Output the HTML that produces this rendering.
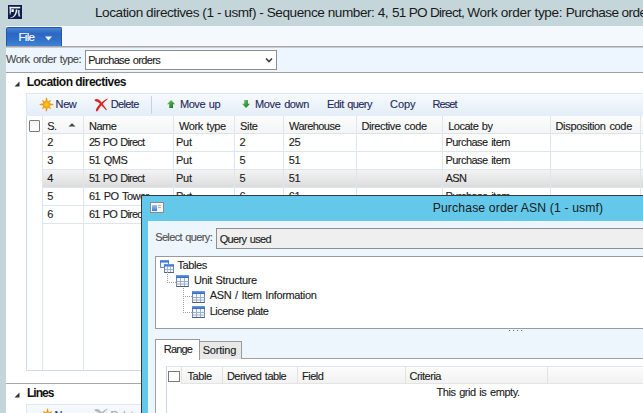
<!DOCTYPE html>
<html><head><meta charset="utf-8">
<style>
html,body{margin:0;padding:0;}
body{width:643px;height:413px;overflow:hidden;position:relative;background:#c5d6db;font-family:"Liberation Sans",sans-serif;}
.a{position:absolute;}
.t{position:absolute;white-space:pre;line-height:1;font-family:"Liberation Sans",sans-serif;}
</style></head><body>
<!-- main window client -->
<div class="a" style="left:6px;top:26px;width:637px;height:387px;background:#fff"></div>
<!-- ribbon strip -->
<div class="a" style="left:6px;top:26px;width:637px;height:20px;background:#f4f9fe"></div>
<!-- File button -->
<div class="a" style="left:6px;top:26.5px;width:54px;height:19.5px;border:1px solid #2656a8;border-bottom:none;border-radius:2px 2px 0 0;background:linear-gradient(#4a84d6,#2d66c2 30%,#3170c8 60%,#4285da)"></div>
<svg class="a" style="left:45px;top:35.7px" width="7" height="5"><path d="M0 0.5H7L3.5 4.5Z" fill="#fff"/></svg>
<!-- line under ribbon -->
<div class="a" style="left:6px;top:46px;width:637px;height:1px;background:#a7a7a7"></div>
<div class="a" style="left:6px;top:47px;width:637px;height:1px;background:#c9ccd0"></div>
<!-- filter strip -->
<div class="a" style="left:6px;top:48px;width:637px;height:24px;background:#edf6fe"></div>
<div class="a" style="left:6px;top:72px;width:637px;height:1px;background:#a0a0a0"></div>
<!-- combo -->
<div class="a" style="left:85px;top:50px;width:190px;height:18px;border:1px solid #8f8f8f;background:#fff"></div>
<svg class="a" style="left:265px;top:57px" width="8" height="7"><path d="M1 1.5L4 4.6L7 1.5" stroke="#3a3a3a" stroke-width="1.5" fill="none"/></svg>
<!-- section triangle -->
<svg class="a" style="left:14px;top:81px" width="6" height="6"><path d="M5.5 0.5V5.5H0.5Z" fill="#333"/></svg>
<!-- toolbar -->
<div class="a" style="left:26px;top:93px;width:617px;height:22px;border-top:1px solid #dfe8f1;border-left:1px solid #dfe8f1;background:linear-gradient(#f7fafd,#eaf2fa 60%,#e4eef9)"></div>
<div class="a" style="left:151px;top:96px;width:1px;height:18px;background:#c8d2dc"></div>
<!-- sun icon -->
<svg class="a" style="left:39px;top:97.3px" width="15" height="15" viewBox="0 0 15 15">
 <defs><radialGradient id="sg" cx="0.5" cy="0.5" r="0.5"><stop offset="0" stop-color="#ffd21a"/><stop offset="0.5" stop-color="#f9b20e"/><stop offset="1" stop-color="#e98a0c"/></radialGradient></defs>
 <path d="M7.50 0.80 L8.42 5.28 L11.46 3.54 L9.72 6.58 L14.20 7.50 L9.72 8.42 L11.46 11.46 L8.42 9.72 L7.50 14.20 L6.58 9.72 L3.54 11.46 L5.28 8.42 L0.80 7.50 L5.28 6.58 L3.54 3.54 L6.58 5.28Z" fill="url(#sg)" stroke="#ee9410" stroke-width="0.9" stroke-linejoin="round"/>
</svg>
<!-- X icon -->
<svg class="a" style="left:94px;top:98px" width="14" height="14" viewBox="0 0 14 14">
 <path d="M0.6 1.6C2.4 0.2 5.2 0.8 7.6 4.4L12.8 11.6L12.1 12.2L6.6 6.4C4.6 4.2 2.6 3.4 0.9 2.9Z M13.3 0.6L13.6 1.3C9.4 4.4 6.4 8.2 4 12.6C3.4 13.6 1.9 13.7 1.8 12.6C2.6 9 7.2 3.8 13.3 0.6Z" fill="#d8261e"/>
</svg>
<!-- up arrow -->
<svg class="a" style="left:167px;top:100px" width="8" height="8" viewBox="0 0 8 8">
 <defs><linearGradient id="ga" x1="0" y1="0" x2="1" y2="1"><stop offset="0" stop-color="#7acb74"/><stop offset="0.55" stop-color="#3d9a3e"/><stop offset="1" stop-color="#17601c"/></linearGradient></defs>
 <path d="M4 0L8 4.2H6V8H2.2V4.2H0Z" fill="url(#ga)"/>
</svg>
<!-- down arrow -->
<svg class="a" style="left:242px;top:100px" width="8" height="8" viewBox="0 0 8 8">
 <path d="M4 8L8 3.8H6V0H2.2V3.8H0Z" fill="url(#ga)"/>
</svg>
<!-- grid -->
<div class="a" style="left:26px;top:116px;width:617px;height:255px;border-left:1px solid #cfdbe8;border-bottom:1px solid #cfdbe8;background:#fff;box-sizing:border-box"></div>
<!-- header -->
<div class="a" style="left:42px;top:116px;width:601px;height:17px;background:linear-gradient(#fdfdfd,#f3f4f5);border-bottom:1px solid #dfe3e8"></div>
<div class="a" style="left:29px;top:120px;width:9px;height:9.5px;border:1px solid #7c7c7c;background:linear-gradient(#f4f4f4,#fff);border-radius:1px"></div>
<svg class="a" style="left:68px;top:123px" width="8" height="4"><path d="M0.5 3.5L4 0.3L7.5 3.5Z" fill="#444"/></svg>
<!-- header separators -->
<div class="a" style="left:42px;top:116px;width:1px;height:17px;background:#e6e9ec"></div>
<div class="a" style="left:83px;top:116px;width:1px;height:17px;background:#e2e6ea"></div>
<div class="a" style="left:173px;top:116px;width:1px;height:17px;background:#e2e6ea"></div>
<div class="a" style="left:234px;top:116px;width:1px;height:17px;background:#e2e6ea"></div>
<div class="a" style="left:283px;top:116px;width:1px;height:17px;background:#e2e6ea"></div>
<div class="a" style="left:356px;top:116px;width:1px;height:17px;background:#e2e6ea"></div>
<div class="a" style="left:442px;top:116px;width:1px;height:17px;background:#e2e6ea"></div>
<div class="a" style="left:550px;top:116px;width:1px;height:17px;background:#e2e6ea"></div>
<div class="a" style="left:640px;top:116px;width:1px;height:17px;background:#e2e6ea"></div>
<!-- selected row -->
<div class="a" style="left:42px;top:170px;width:601px;height:17px;background:linear-gradient(#f3f3f3,#e6e6e6 60%,#dcdcdc)"></div>
<!-- row lines -->
<div class="a" style="left:42px;top:151px;width:601px;height:1px;background:#dde6ef"></div>
<div class="a" style="left:42px;top:169px;width:601px;height:1px;background:#dde6ef"></div>
<div class="a" style="left:42px;top:187px;width:601px;height:1px;background:#dde6ef"></div>
<div class="a" style="left:42px;top:205px;width:601px;height:1px;background:#dde6ef"></div>
<div class="a" style="left:42px;top:223px;width:601px;height:1px;background:#dde6ef"></div>
<!-- column lines in body -->
<div class="a" style="left:42px;top:133px;width:1px;height:237px;background:#dde6ef"></div>
<div class="a" style="left:83px;top:133px;width:1px;height:237px;background:#dde6ef"></div>
<div class="a" style="left:173px;top:133px;width:1px;height:90px;background:#dde6ef"></div>
<div class="a" style="left:234px;top:133px;width:1px;height:90px;background:#dde6ef"></div>
<div class="a" style="left:283px;top:133px;width:1px;height:90px;background:#dde6ef"></div>
<div class="a" style="left:356px;top:133px;width:1px;height:90px;background:#dde6ef"></div>
<div class="a" style="left:442px;top:133px;width:1px;height:90px;background:#dde6ef"></div>
<div class="a" style="left:550px;top:133px;width:1px;height:90px;background:#dde6ef"></div>
<div class="a" style="left:640px;top:133px;width:1px;height:90px;background:#dde6ef"></div>
<!-- lines section -->
<div class="a" style="left:6px;top:383px;width:637px;height:1px;background:#a8a8a8"></div>
<svg class="a" style="left:14px;top:392px" width="6" height="6"><path d="M5.5 0.5V5.5H0.5Z" fill="#333"/></svg>
<div class="a" style="left:26px;top:404px;width:617px;height:12px;border-top:1px solid #dfe8f1;border-left:1px solid #dfe8f1;background:linear-gradient(#f7fafd,#eef4fb)"></div>
<svg class="a" style="left:40px;top:407.7px" width="15" height="15" viewBox="0 0 15 15">
 <defs><radialGradient id="sg" cx="0.5" cy="0.5" r="0.5"><stop offset="0" stop-color="#ffd21a"/><stop offset="0.5" stop-color="#f9b20e"/><stop offset="1" stop-color="#e98a0c"/></radialGradient></defs>
 <path d="M7.50 0.80 L8.42 5.28 L11.46 3.54 L9.72 6.58 L14.20 7.50 L9.72 8.42 L11.46 11.46 L8.42 9.72 L7.50 14.20 L6.58 9.72 L3.54 11.46 L5.28 8.42 L0.80 7.50 L5.28 6.58 L3.54 3.54 L6.58 5.28Z" fill="url(#sg)" stroke="#ee9410" stroke-width="0.9" stroke-linejoin="round"/>
</svg>
<svg class="a" style="left:94px;top:408px" width="14" height="14" viewBox="0 0 14 14">
 <path d="M0.6 1.6C2.4 0.2 5.2 0.8 7.6 4.4L12.8 11.6L12.1 12.2L6.6 6.4C4.6 4.2 2.6 3.4 0.9 2.9Z M13.3 0.6L13.6 1.3C9.4 4.4 6.4 8.2 4 12.6C3.4 13.6 1.9 13.7 1.8 12.6C2.6 9 7.2 3.8 13.3 0.6Z" fill="#b4b4b4"/>
</svg>

<!-- app icon -->
<svg class="a" style="left:8px;top:5px" width="14" height="14" viewBox="0 0 14 14">
 <rect x="0" y="0" width="14" height="14" fill="#0e1d4c"/>
 <rect x="1.6" y="1.8" width="10.6" height="1.6" fill="#f4f6fa"/>
 <rect x="1.6" y="1.8" width="1.3" height="6.2" fill="#e8ecf4"/>
 <rect x="3.4" y="4.2" width="2.4" height="2.8" fill="#fff"/>
 <path d="M2.5 12.6C5.6 12.2 7.4 9.6 7.8 4.6L9.4 4.6C9 9.4 7 12.6 2.5 13.2Z" fill="#f0f3f8"/>
 <path d="M9.8 5L11.6 5L11.6 8.5L12.4 11.6L10.6 11.6L9.8 8Z" fill="#c9d2e4"/>
 <rect x="1.6" y="8" width="1.3" height="1.6" fill="#9aa6c2"/>
</svg>
<div class='t' style='left:95.00px;top:5.89px;font-size:13.6px;font-weight:400;color:#1a1a1a;letter-spacing:-0.450px;word-spacing:0px'>Location directives (1 - usmf) - Sequence number: 4, </div>
<div class='t' style='left:391.90px;top:5.89px;font-size:13.6px;font-weight:400;color:#1a1a1a;letter-spacing:-0.720px;word-spacing:0px'>51 PO Direct, </div>
<div class='t' style='left:467.20px;top:5.89px;font-size:13.6px;font-weight:400;color:#1a1a1a;letter-spacing:-0.319px;word-spacing:0px'>Work order type: </div>
<div class='t' style='left:565.80px;top:5.89px;font-size:13.6px;font-weight:400;color:#1a1a1a;letter-spacing:-0.600px;word-spacing:0px'>Purchase orders</div>
<div class='t' style='left:18.50px;top:31.57px;font-size:11.5px;font-weight:400;color:#ffffff;letter-spacing:-0.677px;word-spacing:0px;-webkit-text-stroke:0.12px #ffffff'>File</div>
<div class='t' style='left:6.00px;top:53.89px;font-size:11px;font-weight:400;color:#4a4a4a;letter-spacing:-0.507px;word-spacing:1.0px;-webkit-text-stroke:0.12px #4a4a4a'>Work order type:</div>
<div class='t' style='left:88.20px;top:54.99px;font-size:11px;font-weight:400;color:#1b1b1b;letter-spacing:-0.658px;word-spacing:1.0px;-webkit-text-stroke:0.12px #1b1b1b'>Purchase orders</div>
<div class='t' style='left:26.70px;top:75.84px;font-size:12px;font-weight:700;color:#111;letter-spacing:-0.532px;word-spacing:0px'>Location directives</div>
<div class='t' style='left:55.60px;top:98.59px;font-size:11px;font-weight:400;color:#252a5c;letter-spacing:-0.408px;word-spacing:0px;-webkit-text-stroke:0.12px #252a5c'>New</div>
<div class='t' style='left:110.70px;top:98.59px;font-size:11px;font-weight:400;color:#252a5c;letter-spacing:-0.639px;word-spacing:0px;-webkit-text-stroke:0.12px #252a5c'>Delete</div>
<div class='t' style='left:179.90px;top:98.59px;font-size:11px;font-weight:400;color:#252a5c;letter-spacing:-0.401px;word-spacing:1.0px;-webkit-text-stroke:0.12px #252a5c'>Move up</div>
<div class='t' style='left:255.10px;top:98.59px;font-size:11px;font-weight:400;color:#252a5c;letter-spacing:-0.383px;word-spacing:1.0px;-webkit-text-stroke:0.12px #252a5c'>Move down</div>
<div class='t' style='left:326.90px;top:98.59px;font-size:11px;font-weight:400;color:#252a5c;letter-spacing:-0.548px;word-spacing:1.0px;-webkit-text-stroke:0.12px #252a5c'>Edit query</div>
<div class='t' style='left:390.00px;top:98.59px;font-size:11px;font-weight:400;color:#252a5c;letter-spacing:-0.062px;word-spacing:0px;-webkit-text-stroke:0.12px #252a5c'>Copy</div>
<div class='t' style='left:432.50px;top:98.59px;font-size:11px;font-weight:400;color:#252a5c;letter-spacing:-0.938px;word-spacing:0px;-webkit-text-stroke:0.12px #252a5c'>Reset</div>
<div class='t' style='left:47.30px;top:120.59px;font-size:11px;font-weight:400;color:#1b1b1b;letter-spacing:-0.600px;word-spacing:0px;-webkit-text-stroke:0.12px #1b1b1b'>S.</div>
<div class='t' style='left:88.90px;top:120.59px;font-size:11px;font-weight:400;color:#1b1b1b;letter-spacing:-0.415px;word-spacing:0px;-webkit-text-stroke:0.12px #1b1b1b'>Name</div>
<div class='t' style='left:179.00px;top:120.59px;font-size:11px;font-weight:400;color:#1b1b1b;letter-spacing:-0.389px;word-spacing:1.0px;-webkit-text-stroke:0.12px #1b1b1b'>Work type</div>
<div class='t' style='left:240.00px;top:120.59px;font-size:11px;font-weight:400;color:#1b1b1b;letter-spacing:-0.323px;word-spacing:0px;-webkit-text-stroke:0.12px #1b1b1b'>Site</div>
<div class='t' style='left:289.00px;top:120.59px;font-size:11px;font-weight:400;color:#1b1b1b;letter-spacing:-0.543px;word-spacing:0px;-webkit-text-stroke:0.12px #1b1b1b'>Warehouse</div>
<div class='t' style='left:361.50px;top:120.59px;font-size:11px;font-weight:400;color:#1b1b1b;letter-spacing:-0.400px;word-spacing:1.0px;-webkit-text-stroke:0.12px #1b1b1b'>Directive code</div>
<div class='t' style='left:448.20px;top:120.59px;font-size:11px;font-weight:400;color:#1b1b1b;letter-spacing:-0.488px;word-spacing:1.0px;-webkit-text-stroke:0.12px #1b1b1b'>Locate by</div>
<div class='t' style='left:555.50px;top:120.59px;font-size:11px;font-weight:400;color:#1b1b1b;letter-spacing:-0.331px;word-spacing:1.0px;-webkit-text-stroke:0.12px #1b1b1b'>Disposition code</div>
<div class='t' style='left:47.30px;top:136.69px;font-size:11px;font-weight:400;color:#1b1b1b;letter-spacing:-0.500px;word-spacing:0px;-webkit-text-stroke:0.12px #1b1b1b'>2</div>
<div class='t' style='left:88.90px;top:136.69px;font-size:11px;font-weight:400;color:#1b1b1b;letter-spacing:-0.806px;word-spacing:1.0px;-webkit-text-stroke:0.12px #1b1b1b'>25 PO Direct</div>
<div class='t' style='left:176.00px;top:136.69px;font-size:11px;font-weight:400;color:#1b1b1b;letter-spacing:-0.258px;word-spacing:0px;-webkit-text-stroke:0.12px #1b1b1b'>Put</div>
<div class='t' style='left:239.50px;top:136.69px;font-size:11px;font-weight:400;color:#1b1b1b;letter-spacing:-0.500px;word-spacing:0px;-webkit-text-stroke:0.12px #1b1b1b'>2</div>
<div class='t' style='left:288.80px;top:136.69px;font-size:11px;font-weight:400;color:#1b1b1b;letter-spacing:-0.500px;word-spacing:0px;-webkit-text-stroke:0.12px #1b1b1b'>25</div>
<div class='t' style='left:445.40px;top:136.69px;font-size:11px;font-weight:400;color:#1b1b1b;letter-spacing:-0.526px;word-spacing:1.0px;-webkit-text-stroke:0.12px #1b1b1b'>Purchase item</div>
<div class='t' style='left:47.30px;top:154.69px;font-size:11px;font-weight:400;color:#1b1b1b;letter-spacing:-0.500px;word-spacing:0px;-webkit-text-stroke:0.12px #1b1b1b'>3</div>
<div class='t' style='left:88.90px;top:154.69px;font-size:11px;font-weight:400;color:#1b1b1b;letter-spacing:-0.500px;word-spacing:1.0px;-webkit-text-stroke:0.12px #1b1b1b'>51 QMS</div>
<div class='t' style='left:176.00px;top:154.69px;font-size:11px;font-weight:400;color:#1b1b1b;letter-spacing:-0.258px;word-spacing:0px;-webkit-text-stroke:0.12px #1b1b1b'>Put</div>
<div class='t' style='left:239.50px;top:154.69px;font-size:11px;font-weight:400;color:#1b1b1b;letter-spacing:-0.500px;word-spacing:0px;-webkit-text-stroke:0.12px #1b1b1b'>5</div>
<div class='t' style='left:288.80px;top:154.69px;font-size:11px;font-weight:400;color:#1b1b1b;letter-spacing:-0.500px;word-spacing:0px;-webkit-text-stroke:0.12px #1b1b1b'>51</div>
<div class='t' style='left:445.40px;top:154.69px;font-size:11px;font-weight:400;color:#1b1b1b;letter-spacing:-0.526px;word-spacing:1.0px;-webkit-text-stroke:0.12px #1b1b1b'>Purchase item</div>
<div class='t' style='left:47.30px;top:172.69px;font-size:11px;font-weight:400;color:#1b1b1b;letter-spacing:-0.500px;word-spacing:0px;-webkit-text-stroke:0.12px #1b1b1b'>4</div>
<div class='t' style='left:88.90px;top:172.69px;font-size:11px;font-weight:400;color:#1b1b1b;letter-spacing:-0.806px;word-spacing:1.0px;-webkit-text-stroke:0.12px #1b1b1b'>51 PO Direct</div>
<div class='t' style='left:176.00px;top:172.69px;font-size:11px;font-weight:400;color:#1b1b1b;letter-spacing:-0.258px;word-spacing:0px;-webkit-text-stroke:0.12px #1b1b1b'>Put</div>
<div class='t' style='left:239.50px;top:172.69px;font-size:11px;font-weight:400;color:#1b1b1b;letter-spacing:-0.500px;word-spacing:0px;-webkit-text-stroke:0.12px #1b1b1b'>5</div>
<div class='t' style='left:288.80px;top:172.69px;font-size:11px;font-weight:400;color:#1b1b1b;letter-spacing:-0.500px;word-spacing:0px;-webkit-text-stroke:0.12px #1b1b1b'>51</div>
<div class='t' style='left:445.40px;top:172.69px;font-size:11px;font-weight:400;color:#1b1b1b;letter-spacing:-0.500px;word-spacing:0px;-webkit-text-stroke:0.12px #1b1b1b'>ASN</div>
<div class='t' style='left:47.30px;top:190.69px;font-size:11px;font-weight:400;color:#1b1b1b;letter-spacing:-0.500px;word-spacing:0px;-webkit-text-stroke:0.12px #1b1b1b'>5</div>
<div class='t' style='left:88.90px;top:190.69px;font-size:11px;font-weight:400;color:#1b1b1b;letter-spacing:-0.500px;word-spacing:1.0px;-webkit-text-stroke:0.12px #1b1b1b'>61 PO Tower</div>
<div class='t' style='left:176.00px;top:190.69px;font-size:11px;font-weight:400;color:#1b1b1b;letter-spacing:-0.258px;word-spacing:0px;-webkit-text-stroke:0.12px #1b1b1b'>Put</div>
<div class='t' style='left:239.50px;top:190.69px;font-size:11px;font-weight:400;color:#1b1b1b;letter-spacing:-0.500px;word-spacing:0px;-webkit-text-stroke:0.12px #1b1b1b'>6</div>
<div class='t' style='left:288.80px;top:190.69px;font-size:11px;font-weight:400;color:#1b1b1b;letter-spacing:-0.500px;word-spacing:0px;-webkit-text-stroke:0.12px #1b1b1b'>61</div>
<div class='t' style='left:445.40px;top:190.69px;font-size:11px;font-weight:400;color:#1b1b1b;letter-spacing:-0.526px;word-spacing:1.0px;-webkit-text-stroke:0.12px #1b1b1b'>Purchase item</div>
<div class='t' style='left:47.30px;top:208.69px;font-size:11px;font-weight:400;color:#1b1b1b;letter-spacing:-0.500px;word-spacing:0px;-webkit-text-stroke:0.12px #1b1b1b'>6</div>
<div class='t' style='left:88.90px;top:208.69px;font-size:11px;font-weight:400;color:#1b1b1b;letter-spacing:-0.806px;word-spacing:1.0px;-webkit-text-stroke:0.12px #1b1b1b'>61 PO Direct</div>
<div class='t' style='left:176.00px;top:208.69px;font-size:11px;font-weight:400;color:#1b1b1b;letter-spacing:-0.258px;word-spacing:0px;-webkit-text-stroke:0.12px #1b1b1b'>Put</div>
<div class='t' style='left:239.50px;top:208.69px;font-size:11px;font-weight:400;color:#1b1b1b;letter-spacing:-0.500px;word-spacing:0px;-webkit-text-stroke:0.12px #1b1b1b'>6</div>
<div class='t' style='left:288.80px;top:208.69px;font-size:11px;font-weight:400;color:#1b1b1b;letter-spacing:-0.500px;word-spacing:0px;-webkit-text-stroke:0.12px #1b1b1b'>61</div>
<div class='t' style='left:445.40px;top:208.69px;font-size:11px;font-weight:400;color:#1b1b1b;letter-spacing:-0.526px;word-spacing:1.0px;-webkit-text-stroke:0.12px #1b1b1b'>Purchase item</div>
<div class='t' style='left:26.90px;top:387.14px;font-size:12px;font-weight:700;color:#111;letter-spacing:-0.936px;word-spacing:0px'>Lines</div>
<div class='t' style='left:54.50px;top:410.49px;font-size:11px;font-weight:400;color:#252a5c;letter-spacing:-0.408px;word-spacing:0px;-webkit-text-stroke:0.12px #252a5c'>New</div>
<div class='t' style='left:110.50px;top:410.49px;font-size:11px;font-weight:400;color:#a8a8a8;letter-spacing:-0.639px;word-spacing:0px;-webkit-text-stroke:0.12px #a8a8a8'>Delete</div>
<!-- ========== DIALOG ========== -->
<div class="a" style="left:141px;top:195px;width:502px;height:218px;background:#2f3a40"></div>
<div class="a" style="left:142px;top:196px;width:501px;height:217px;background:#63c8e9"></div>
<div class="a" style="left:148px;top:221px;width:495px;height:192px;background:#edf6fd"></div>
<!-- dialog icon -->
<div class="a" style="left:150px;top:202px;width:12px;height:9px;border:1px solid #8a8a8a;background:#f4f4f4"></div>
<div class="a" style="left:152px;top:205px;width:5px;height:6px;background:linear-gradient(#9fc4ef,#3d7ad0)"></div>
<div class="a" style="left:158px;top:205px;width:3px;height:1px;background:#b0b0b0"></div>
<div class="a" style="left:158px;top:207px;width:3px;height:1px;background:#b0b0b0"></div>
<!-- select query box -->
<div class="a" style="left:216px;top:228px;width:427px;height:19px;border:1px solid #8e8e8e;border-right:none;background:#efefef"></div>
<!-- tree box -->
<div class="a" style="left:155px;top:256px;width:488px;height:71px;border:1px solid #9a9a9a;border-right:none;background:#fff"></div>
<!-- tree icons -->
<svg class="a" style="left:0;top:0" width="0" height="0"><defs><linearGradient id="th" x1="0" y1="0" x2="0" y2="1"><stop offset="0" stop-color="#6aa0ea"/><stop offset="1" stop-color="#2f64c4"/></linearGradient></defs></svg>
<svg class="a" style="left:160px;top:259.5px" width="14" height="13" viewBox="0 0 14 13">
 <rect x="0.5" y="0.5" width="8" height="7" fill="#eef3fa" stroke="#6f86a8"/>
 <rect x="0" y="0" width="9" height="2.5" fill="url(#th)"/>
 <rect x="4.5" y="4.5" width="9" height="8" fill="#f4f7fb" stroke="#6f86a8"/>
 <rect x="4" y="4" width="10" height="2.5" fill="url(#th)"/>
 <path d="M7.5 6.5V12M10.5 6.5V12M5 9.5H13" stroke="#9cb0cc" stroke-width="0.9"/>
 <path d="M4.5 12.5H13.5" stroke="#4d5f7d"/>
</svg>
<svg class="a" style="left:176px;top:275px" width="13" height="12" viewBox="0 0 13 12">
 <rect x="0.5" y="0.5" width="12" height="11" fill="#f4f7fb" stroke="#6f86a8"/>
 <rect x="0" y="0" width="13" height="3" fill="url(#th)"/>
 <path d="M4.5 3V11.5M8.5 3V11.5M0.5 6.5H12.5M0.5 9H12.5" stroke="#9cb0cc" stroke-width="1"/>
 <path d="M0.5 11.5H12.5" stroke="#4d5f7d" stroke-width="1"/>
</svg>
<svg class="a" style="left:192px;top:291px" width="13" height="12" viewBox="0 0 13 12">
 <rect x="0.5" y="0.5" width="12" height="11" fill="#f4f7fb" stroke="#6f86a8"/>
 <rect x="0" y="0" width="13" height="3" fill="url(#th)"/>
 <path d="M4.5 3V11.5M8.5 3V11.5M0.5 6.5H12.5M0.5 9H12.5" stroke="#9cb0cc" stroke-width="1"/>
 <path d="M0.5 11.5H12.5" stroke="#4d5f7d" stroke-width="1"/>
</svg>
<svg class="a" style="left:192px;top:306px" width="13" height="12" viewBox="0 0 13 12">
 <rect x="0.5" y="0.5" width="12" height="11" fill="#f4f7fb" stroke="#6f86a8"/>
 <rect x="0" y="0" width="13" height="3" fill="url(#th)"/>
 <path d="M4.5 3V11.5M8.5 3V11.5M0.5 6.5H12.5M0.5 9H12.5" stroke="#9cb0cc" stroke-width="1"/>
 <path d="M0.5 11.5H12.5" stroke="#4d5f7d" stroke-width="1"/>
</svg>
<!-- dotted tree lines -->
<div class="a" style="left:167px;top:272px;width:1px;height:10px;background:repeating-linear-gradient(#a0a0a0 0 1px,transparent 1px 2px)"></div>
<div class="a" style="left:167px;top:282px;width:9px;height:1px;background:repeating-linear-gradient(90deg,#a0a0a0 0 1px,transparent 1px 2px)"></div>
<div class="a" style="left:183px;top:288px;width:1px;height:24px;background:repeating-linear-gradient(#a0a0a0 0 1px,transparent 1px 2px)"></div>
<div class="a" style="left:183px;top:296px;width:9px;height:1px;background:repeating-linear-gradient(90deg,#a0a0a0 0 1px,transparent 1px 2px)"></div>
<div class="a" style="left:183px;top:312px;width:9px;height:1px;background:repeating-linear-gradient(90deg,#a0a0a0 0 1px,transparent 1px 2px)"></div>
<!-- splitter dots -->
<svg class="a" style="left:509px;top:330px" width="17" height="2"><path d="M0 0.5h1.2M4 0.5h1.2M8 0.5h1.2M12 0.5h1.2" stroke="#777" stroke-width="1"/></svg>
<!-- tabs -->
<div class="a" style="left:155px;top:358px;width:488px;height:55px;border-top:1px solid #a0a0a0;border-left:1px solid #a0a0a0;background:#fff"></div>
<div class="a" style="left:199px;top:341px;width:41px;height:17px;border:1px solid #9a9a9a;border-bottom:none;background:#e8e8e8"></div>
<div class="a" style="left:155px;top:339px;width:43px;height:20px;border:1px solid #9a9a9a;border-bottom:none;background:#fff"></div>
<!-- inner grid -->
<div class="a" style="left:166px;top:366px;width:477px;height:47px;border-left:1px solid #cad8e8;border-top:1px solid #dbe5f0;background:#fff"></div>
<div class="a" style="left:182px;top:368px;width:461px;height:15px;background:linear-gradient(#fbfbfb,#f2f2f2);border-bottom:1px solid #e4e4e4"></div>
<div class="a" style="left:168px;top:371px;width:10px;height:9px;border:1px solid #7a7a7a;background:#fff"></div>
<div class="a" style="left:181px;top:367px;width:1px;height:17px;background:#e2e2e2"></div>
<div class="a" style="left:222px;top:367px;width:1px;height:17px;background:#e2e2e2"></div>
<div class="a" style="left:297px;top:367px;width:1px;height:17px;background:#e2e2e2"></div>
<div class="a" style="left:405px;top:367px;width:1px;height:17px;background:#e2e2e2"></div>
<div class="a" style="left:547px;top:367px;width:1px;height:17px;background:#e2e2e2"></div>
<div class='t' style='left:432.70px;top:202.27px;font-size:12.2px;font-weight:400;color:#1a1a1a;letter-spacing:0.138px;word-spacing:0px'>Purchase order ASN (1 - usmf)</div>
<div class='t' style='left:155.20px;top:232.44px;font-size:11px;font-weight:400;color:#505050;letter-spacing:-0.642px;word-spacing:1.0px;-webkit-text-stroke:0.12px #505050'>Select query:</div>
<div class='t' style='left:219.70px;top:233.59px;font-size:11px;font-weight:400;color:#1b1b1b;letter-spacing:-0.653px;word-spacing:1.0px;-webkit-text-stroke:0.12px #1b1b1b'>Query used</div>
<div class='t' style='left:177.50px;top:259.69px;font-size:11px;font-weight:400;color:#1b1b1b;letter-spacing:-0.399px;word-spacing:0px;-webkit-text-stroke:0.12px #1b1b1b'>Tables</div>
<div class='t' style='left:193.90px;top:274.69px;font-size:11px;font-weight:400;color:#1b1b1b;letter-spacing:-0.388px;word-spacing:1.0px;-webkit-text-stroke:0.12px #1b1b1b'>Unit Structure</div>
<div class='t' style='left:209.80px;top:290.44px;font-size:11px;font-weight:400;color:#1b1b1b;letter-spacing:-0.346px;word-spacing:1.0px;-webkit-text-stroke:0.12px #1b1b1b'>ASN / Item Information</div>
<div class='t' style='left:209.80px;top:306.19px;font-size:11px;font-weight:400;color:#1b1b1b;letter-spacing:-0.569px;word-spacing:1.0px;-webkit-text-stroke:0.12px #1b1b1b'>License plate</div>
<div class='t' style='left:163.80px;top:344.49px;font-size:11px;font-weight:400;color:#1b1b1b;letter-spacing:-0.855px;word-spacing:0px;-webkit-text-stroke:0.12px #1b1b1b'>Range</div>
<div class='t' style='left:202.70px;top:344.69px;font-size:11px;font-weight:400;color:#1b1b1b;letter-spacing:-0.210px;word-spacing:0px;-webkit-text-stroke:0.12px #1b1b1b'>Sorting</div>
<div class='t' style='left:187.40px;top:370.99px;font-size:11px;font-weight:400;color:#1b1b1b;letter-spacing:-0.362px;word-spacing:0px;-webkit-text-stroke:0.12px #1b1b1b'>Table</div>
<div class='t' style='left:226.90px;top:370.99px;font-size:11px;font-weight:400;color:#1b1b1b;letter-spacing:-0.500px;word-spacing:1.0px;-webkit-text-stroke:0.12px #1b1b1b'>Derived table</div>
<div class='t' style='left:302.00px;top:370.99px;font-size:11px;font-weight:400;color:#1b1b1b;letter-spacing:-0.500px;word-spacing:0px;-webkit-text-stroke:0.12px #1b1b1b'>Field</div>
<div class='t' style='left:409.50px;top:370.99px;font-size:11px;font-weight:400;color:#1b1b1b;letter-spacing:-0.500px;word-spacing:0px;-webkit-text-stroke:0.12px #1b1b1b'>Criteria</div>
<div class='t' style='left:436.50px;top:386.69px;font-size:11px;font-weight:400;color:#1b1b1b;letter-spacing:-0.441px;word-spacing:1.0px;-webkit-text-stroke:0.12px #1b1b1b'>This grid is empty.</div>
</body></html>
